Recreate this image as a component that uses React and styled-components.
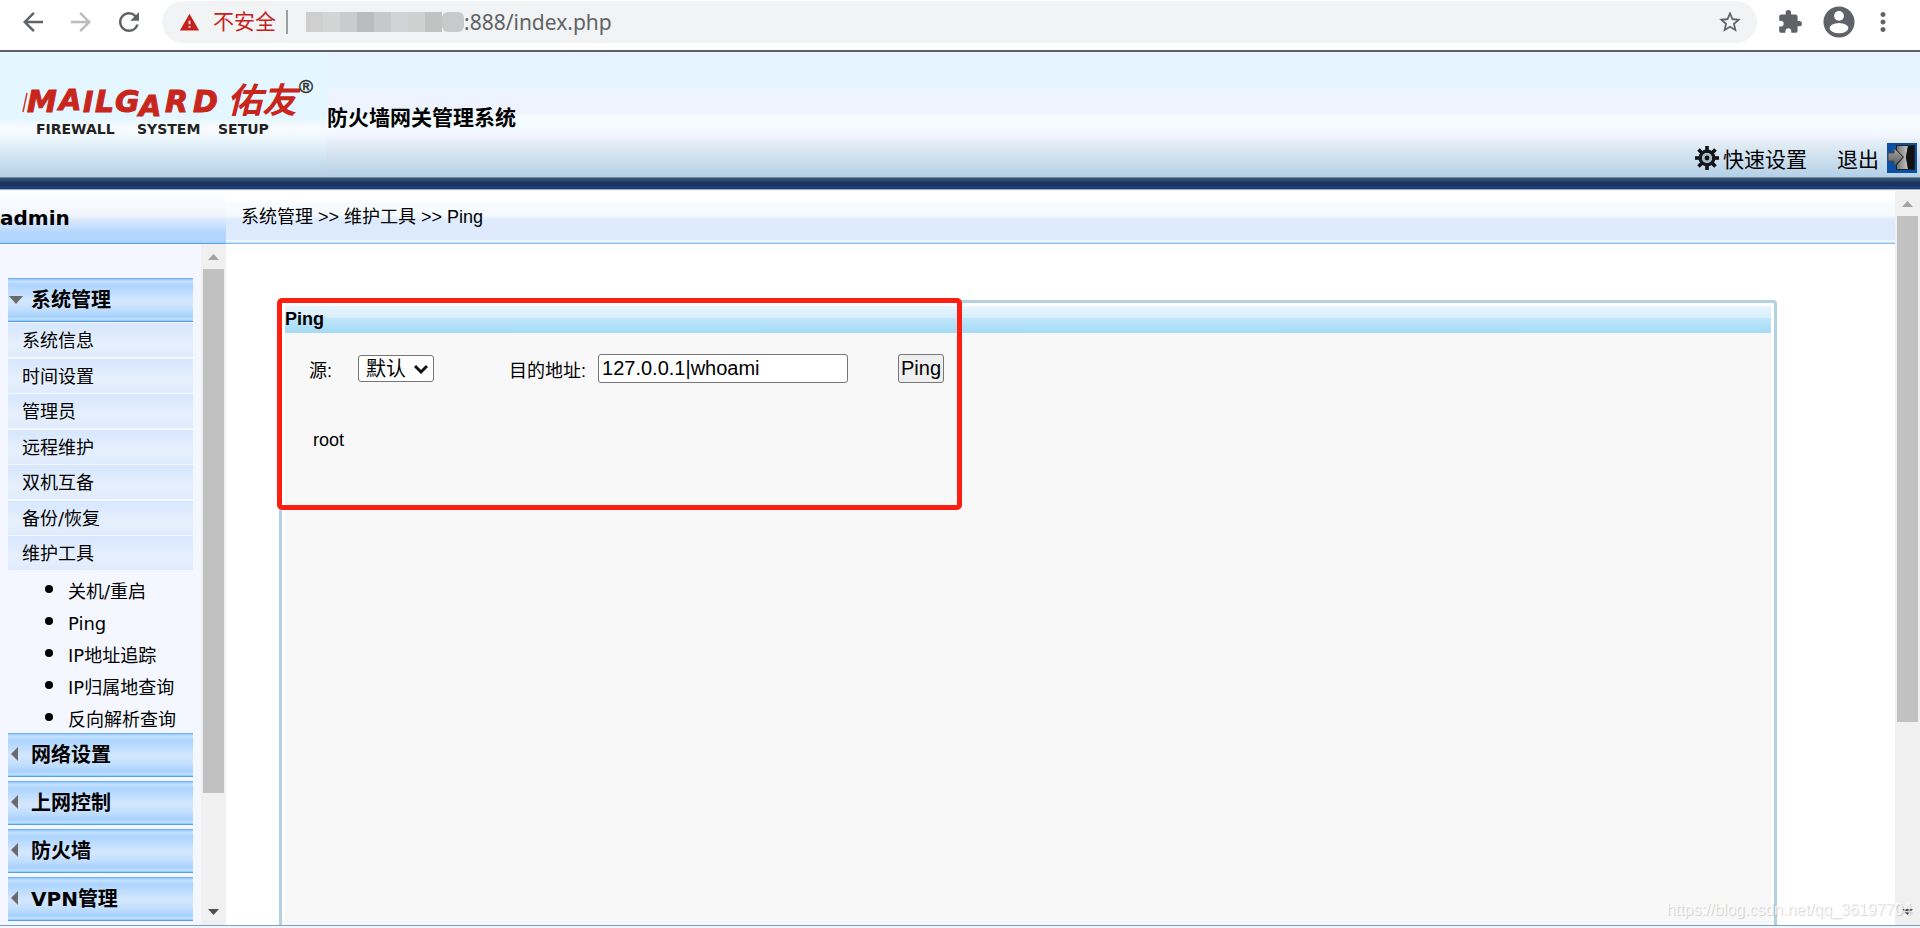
import React, { useState } from 'react';
import styled, { createGlobalStyle } from 'styled-components';
import {
  MdArrowBack,
  MdArrowForward,
  MdRefresh,
  MdWarning,
  MdStarBorder,
  MdExtension,
  MdMoreVert,
} from 'react-icons/md';

const GlobalStyle = createGlobalStyle`
  * {
    box-sizing: border-box;
  }

  body {
    margin: 0;
    font-family: "Liberation Sans", "Noto Sans CJK SC", sans-serif;
    font-size: 18px;
    color: #000;
  }

  button, input, select {
    font-family: inherit;
    color: inherit;
    margin: 0;
  }

  ul {
    list-style: none;
    margin: 0;
    padding: 0;
  }
`;

const Page = styled.div`
  display: flex;
  flex-direction: column;
  height: 100vh;
  overflow: hidden;
  background: #fff;
`;

/* browser bar */

const BrowserBar = styled.div`
  display: flex;
  align-items: center;
  flex: none;
  height: 52px;
  padding: 1px 9px 7px 18px;
  border-bottom: 2px solid #5b6168;
`;

const IconButton = styled.button`
  display: flex;
  align-items: center;
  justify-content: center;
  width: ${(props) => props.$width || 48}px;
  height: 40px;
  padding: 0;
  border: 0;
  background: none;
  color: ${(props) => (props.$muted ? '#babcbe' : '#5f6368')};
`;

const NavButtons = styled.div`
  display: flex;
  margin: 0 9px 0 -9px;
`;

const AddressPill = styled.div`
  display: flex;
  align-items: center;
  flex: 1;
  height: 42px;
  padding: 0 3px 0 17px;
  border-radius: 21px;
  background: #f1f3f4;
`;

const Insecure = styled.span`
  display: flex;
  align-items: center;
  gap: 13px;
  padding-right: 10px;
  border-right: 2px solid #9aa0a6;
  font-size: 21px;
  line-height: 24px;
  color: #c5221f;
`;

const Mosaic = styled.svg`
  flex: none;
  width: 162px;
  height: 30px;
  margin-left: 14px;
`;

const AddressInput = styled.input`
  flex: 1;
  min-width: 0;
  padding: 0;
  border: 0;
  background: none;
  font-family: "Noto Sans", sans-serif;
  font-size: 21px;
  color: #5f6368;
`;

/* application header */

const Header = styled.header`
  display: flex;
  align-items: stretch;
  flex: none;
  height: 125px;
  background: linear-gradient(#e5f4ff 0 36px, #eef4ff 36px 62px, #f5fcff 63px 76px, #f1f5ff 84px, #e1ecf5 92px, #b4d0e6 125px);
`;

const HeaderBand = styled.div`
  flex: none;
  height: 14px;
  background: linear-gradient(#6f8496 0 1px, #33506f 1px 3px, #1c3561 5px, #1a3360 9px, #1f4a86 11px, #0f2d5e 12px, #a9a9c6 12px 13px, #f4f4fa 13px);
`;

const LogoArea = styled.div`
  width: 327px;
  background: linear-gradient(#e4f6ff 0 66px, #f5faff 74px 82px, #e6f3fb 90px, #b4d0e6 125px);
`;

const SystemTitle = styled.h1`
  margin: 0;
  padding-top: 50px;
  font-size: 21px;
  line-height: 32px;
`;

const HeaderActions = styled.nav`
  display: flex;
  align-items: flex-end;
  gap: 30px;
  margin-left: auto;
  padding: 0 3px 4px 0;
`;

const HeaderLink = styled.a`
  display: flex;
  align-items: center;
  gap: ${(props) => props.$gap}px;
  height: 30px;
  font-size: 21px;
  color: #000;
  text-decoration: none;
`;

/* frames */

const Frames = styled.div`
  display: flex;
  flex: 1;
  min-height: 0;
  border-bottom: 1px solid #7c9cd0;
`;

const BottomFrame = styled.div`
  flex: none;
  height: 2px;
  background: #f1f6ff;
`;

const Sidebar = styled.aside`
  display: flex;
  flex-direction: column;
  flex: none;
  width: 226px;
`;

const UserBar = styled.div`
  flex: none;
  height: 53px;
  border-bottom: 1px solid #5a9ff0;
  background: linear-gradient(#fff, #f0f4fc 25px, #dfeafc 28px, #b3d6fe 42px 49px, #a2d2ff 52px);
  font-family: "DejaVu Sans", sans-serif;
  font-size: 20px;
  font-weight: bold;
  line-height: 54px;
`;

const SidebarBody = styled.div`
  display: flex;
  flex: 1;
  min-height: 0;
`;

const Menu = styled.nav`
  flex: 1;
  padding: 34px 8px 0;
  overflow: hidden;
  background: #f4f7ff;
  font-family: "DejaVu Sans", "Noto Sans CJK SC", sans-serif;
`;

const MenuHeading = styled.button`
  display: flex;
  align-items: center;
  width: 100%;
  height: 44px;
  margin-bottom: ${(props) => (props.$open ? 1 : 4)}px;
  padding: 0;
  border: 0;
  border-top: 1px solid #6fb0f8;
  border-bottom: 1px solid #579df2;
  background: linear-gradient(#a0cfff 0 1px, #c8e2ff 2px, #acd4ff 6px, #d5e7fe 22px, #c4dfff 30px, #a5d1ff 38px, #c4e4ff 40px, #8ec6ff 42px);
  font-size: 20px;
  font-weight: bold;
  line-height: 28px;
`;

const MenuArrow = styled.svg`
  width: 16px;
  height: 16px;
  margin-right: 7px;
  fill: #6b6b6b;
`;

const MenuItem = styled.li`
  height: 34px;
  background: linear-gradient(#d6e7ff, #e6effd 60%, #dfecfd);

  &:nth-child(odd) {
    margin-bottom: 2px;
  }

  &:nth-child(even) {
    margin-bottom: 1px;
  }

  &:last-child {
    margin-bottom: 0;
  }
`;

const MenuLink = styled.a`
  display: block;
  padding-left: 14px;
  font-size: 18px;
  line-height: 36px;
  color: #000;
  text-decoration: none;
`;

const SubMenu = styled.ul`
  padding-top: 3px;
`;

const SubItem = styled.li`
  display: flex;
  align-items: center;
  gap: 15px;
  height: 32px;
  padding: 5px 0 0 37px;

  &::before {
    content: '';
    width: 8px;
    height: 8px;
    margin-bottom: 6px;
    border-radius: 50%;
    background: #000;
  }
`;

const SubLink = styled.a`
  font-size: 18px;
  line-height: 28px;
  color: #000;
  text-decoration: none;
  white-space: nowrap;
`;

const Track = styled.div`
  display: flex;
  flex-direction: column;
  align-items: center;
  flex: none;
  width: 25px;
  background: #f0f0f0;
`;

const TrackArrow = styled.svg`
  flex: none;
  width: 25px;
  height: 25px;
  fill: ${(props) => (props.$dim ? '#a3a3a3' : '#505050')};
`;

const Thumb = styled.div`
  flex: 0 0 auto;
  width: 21px;
  height: ${(props) => props.$height};
  background: #c1c1c1;
`;

const ThumbArea = styled.div`
  flex: 1;
  min-height: 0;
`;

const Main = styled.main`
  display: flex;
  flex-direction: column;
  flex: 1;
  min-width: 0;
`;

const Breadcrumb = styled.div`
  flex: none;
  height: 53px;
  padding-left: 15px;
  border-bottom: 1px solid #86bdf6;
  background: linear-gradient(#fff 0 11px, #f5fbff 12px 24px, #deebff 29px 49px, #fff 50px, #b5dcff 52px);
  line-height: 52px;
`;

const Content = styled.div`
  position: relative;
  display: flex;
  flex: 1;
  min-height: 0;
  padding: 56px 118px 0 53px;
`;

const Panel = styled.section`
  flex: 1;
  padding: 3px 3px 0;
  border: 3px solid #adcbe0;
  border-bottom: 0;
  border-color: #b4d0e3;
  border-radius: 4px 4px 0 0;
  background: linear-gradient(#f8f8f8, #f8f8f8) content-box, #fff;
`;

const PanelTitle = styled.h2`
  margin: 0;
  height: 27px;
  background: linear-gradient(#e8f5ff, #d8eefa 12px, #c0e6fd 12px, #a5daf5);
  font-size: 18px;
  line-height: 27px;
`;

const PingForm = styled.form`
  display: flex;
  align-items: center;
  height: 71px;
  padding-left: 24px;
`;

const Field = styled.div`
  display: flex;
  align-items: center;
  gap: ${(props) => props.$gap}px;
  margin-right: ${(props) => props.$after}px;
`;

const SelectBox = styled.div`
  position: relative;
  display: flex;
`;

const Select = styled.select`
  appearance: none;
  width: 76px;
  height: 27px;
  padding: 0 7px;
  border: 1px solid #767676;
  border-radius: 3px;
  background: #fff;
  font-size: 20px;
`;

const Chevron = styled.svg`
  position: absolute;
  top: 8px;
  right: 6px;
  width: 14px;
  height: 12px;
  fill: none;
  stroke: #111;
  stroke-width: 3px;
  pointer-events: none;
`;

const TextInput = styled.input`
  width: 250px;
  height: 29px;
  padding: 0 3px;
  border: 1px solid #767676;
  border-radius: 3px;
  font-size: 20px;
`;

const PingButton = styled.button`
  height: 29px;
  padding: 0 2px;
  border: 1px solid #767676;
  border-radius: 3px;
  background: #efefef;
  font-size: 20px;
`;

const Result = styled.output`
  display: block;
  padding: 25px 0 0 28px;
  line-height: 22px;
`;

/* red frame drawn over the ping form */
const Highlight = styled.div`
  position: absolute;
  top: 54px;
  left: 51px;
  width: 685px;
  height: 212px;
  border: 5px solid #ff1f12;
  border-radius: 5px;
  pointer-events: none;
`;

const Watermark = styled.span`
  position: absolute;
  right: 8px;
  bottom: 7px;
  font-size: 16px;
  line-height: 22px;
  color: rgba(255, 255, 255, 0.8);
  text-shadow: 1px 1px 1px rgba(0, 0, 0, 0.18);
`;

const menuItems = ['系统信息', '时间设置', '管理员', '远程维护', '双机互备', '备份/恢复', '维护工具'];
const toolItems = ['关机/重启', 'Ping', 'IP地址追踪', 'IP归属地查询', '反向解析查询'];
const closedSections = ['网络设置', '上网控制', '防火墙', 'VPN管理'];
const mosaicColors = ['#cfcfcf', '#d3d5d5', '#c9cbcc', '#babcbf', '#c6c8ca', '#d0d2d3', '#cfd1d1', '#c1c2c2', '#c7c9ca'];

const logoLetters = [
  ['M', 27, 60, 30],
  ['A', 59, 58, 29],
  ['I', 83, 60, 28],
  ['L', 95, 60, 30],
  ['G', 115, 60, 30],
  ['A', 139, 64, 29],
  ['R', 165, 60, 30],
  ['D', 193, 60, 30],
];

const Logo = () => (
  <svg width="327" height="125" viewBox="0 0 327 125" role="img" aria-label="MAILGARD">
    <path d="M27 41L23 60" stroke="#cf3a30" strokeWidth="1.5" />
    <g fill="#c8251c" stroke="#c8251c" fontFamily="DejaVu Sans, sans-serif" fontWeight="bold" fontStyle="italic">
      {logoLetters.map(([letter, x, y, size], i) => (
        <text key={i} x={x} y={y} fontSize={size}>{letter}</text>
      ))}
    </g>
    <text x="227" y="61" fill="#c8251c" fontFamily="Noto Sans CJK SC, sans-serif" fontSize="35" fontStyle="italic" fontWeight="bold">
      佑友
    </text>
    <text x="299" y="41" fill="#333" stroke="#333" strokeWidth="0.5" fontFamily="Liberation Sans, sans-serif" fontSize="19">®</text>
    <g fill="#222" fontFamily="DejaVu Sans, sans-serif" fontSize="14" fontWeight="bold">
      <text x="36" y="82">FIREWALL</text>
      <text x="137" y="82">SYSTEM</text>
      <text x="218" y="82">SETUP</text>
    </g>
  </svg>
);

const Avatar = () => (
  <svg width="34" height="34" viewBox="0 0 34 34">
    <circle cx="17" cy="17" r="16.5" fill="#5f6368" />
    <circle cx="17" cy="10.5" r="5.2" fill="#fff" />
    <ellipse cx="17" cy="23.5" rx="10" ry="5.5" fill="#fff" />
  </svg>
);

const GearIcon = () => (
  <svg width="24" height="24" viewBox="-12 -12 24 24">
    {[0, 45, 90, 135, 180, 225, 270, 315].map((angle) => (
      <rect key={angle} x="-1.8" y="-12" width="3.600" height="6" fill="#111" transform={`rotate(${angle})`} />
    ))}
    <circle r="6.8" fill="none" stroke="#15181b" strokeWidth="3.4" />
    <circle r="5" fill="#a9bac6" />
    <circle r="2.4" fill="#111" />
  </svg>
);

const ExitIcon = () => (
  <svg width="30" height="30" viewBox="0 0 30 30">
    <defs>
      <linearGradient id="exitDoor" x1="0" y1="0" x2="1" y2="0">
        <stop offset="0" stopColor="#777" />
        <stop offset="1" stopColor="#c4c4c4" />
      </linearGradient>
      <linearGradient id="exitArrow" x1="0" y1="0" x2="0" y2="1">
        <stop offset="0" stopColor="#a5a5a5" />
        <stop offset="1" stopColor="#5c5c5c" />
      </linearGradient>
    </defs>
    <rect width="30" height="30" fill="#0c50a6" />
    <path d="M9 2h19v25H9v-5l6-7-6-7z" fill="#222" />
    <path d="M10 3h11l-2 11 2 12H10v-4l7-8-7-7z" fill="url(#exitDoor)" />
    <path d="M21 3h6v23h-6l-2-12z" fill="#111" />
    <path d="M1 10h6V5l9 9-9 9v-5H1z" fill="url(#exitArrow)" stroke="#444" strokeWidth="1" />
  </svg>
);

const ScrollTrack = ({ thumb }) => (
  <Track>
    <TrackArrow $dim viewBox="0 0 25 25">
      <path d="M7 16h11l-5.500-6z" />
    </TrackArrow>
    <ThumbArea>
      <Thumb $height={thumb} />
    </ThumbArea>
    <TrackArrow viewBox="0 0 25 25">
      <path d="M7 9h11l-5.500 6z" />
    </TrackArrow>
  </Track>
);

const SectionHeading = ({ label, open, onClick }) => (
  <MenuHeading type="button" $open={open} aria-expanded={open} onClick={onClick}>
    <MenuArrow viewBox="0 0 16 16">
      <path d={open ? 'M1 4h14l-7 8z' : 'M10 0v14L3 7z'} />
    </MenuArrow>
    {label}
  </MenuHeading>
);

const App = () => {
  const [open, setOpen] = useState(true);
  const [target, setTarget] = useState('127.0.0.1|whoami');
  const [result, setResult] = useState('root');

  const handlePing = (e) => {
    e.preventDefault();
    setResult('root');
  };

  return (
    <Page>
      <GlobalStyle />
      <BrowserBar>
        <NavButtons>
          <IconButton type="button" aria-label="Back"><MdArrowBack size={30} /></IconButton>
          <IconButton type="button" aria-label="Forward" $muted><MdArrowForward size={30} /></IconButton>
          <IconButton type="button" aria-label="Reload"><MdRefresh size={30} /></IconButton>
        </NavButtons>
        <AddressPill>
          <Insecure>
            <MdWarning size={21} />
            不安全
          </Insecure>
          <Mosaic viewBox="0 0 162 30">
            {mosaicColors.map((color, i) => (
              <rect key={i} x={4 + i * 17} y="5" width={i === 8 ? 22 : 17} height="20" rx={i === 8 ? 6 : 0} fill={color} />
            ))}
          </Mosaic>
          <AddressInput aria-label="Address" defaultValue=":888/index.php" />
          <IconButton type="button" aria-label="Bookmark"><MdStarBorder size={26} /></IconButton>
        </AddressPill>
        <IconButton type="button" aria-label="Extensions" $width={66}><MdExtension size={26} /></IconButton>
        <IconButton type="button" aria-label="Profile" $width={32}><Avatar /></IconButton>
        <IconButton type="button" aria-label="More" $width={56}><MdMoreVert size={30} /></IconButton>
      </BrowserBar>

      <Header>
        <LogoArea>
          <Logo />
        </LogoArea>
        <SystemTitle>防火墙网关管理系统</SystemTitle>
        <HeaderActions>
          <HeaderLink href="#setup" $gap={4}>
            <GearIcon />
            快速设置
          </HeaderLink>
          <HeaderLink href="#logout" $gap={8}>
            退出
            <ExitIcon />
          </HeaderLink>
        </HeaderActions>
      </Header>
      <HeaderBand />

      <Frames>
        <Sidebar>
          <UserBar>admin</UserBar>
          <SidebarBody>
            <Menu>
              <SectionHeading label="系统管理" open={open} onClick={() => setOpen(!open)} />
              {open && (
                <>
                  <ul>
                    {menuItems.map((item) => (
                      <MenuItem key={item}>
                        <MenuLink href="#menu">{item}</MenuLink>
                      </MenuItem>
                    ))}
                  </ul>
                  <SubMenu>
                    {toolItems.map((item) => (
                      <SubItem key={item}>
                        <SubLink href="#tool">{item}</SubLink>
                      </SubItem>
                    ))}
                  </SubMenu>
                </>
              )}
              {closedSections.map((section) => (
                <SectionHeading key={section} label={section} open={false} />
              ))}
            </Menu>
            <ScrollTrack thumb="83%" />
          </SidebarBody>
        </Sidebar>

        <Main>
          <Breadcrumb>系统管理 &gt;&gt; 维护工具 &gt;&gt; Ping</Breadcrumb>
          <Content>
            <Panel>
              <PanelTitle>Ping</PanelTitle>
              <PingForm onSubmit={handlePing}>
                <Field $gap={26} $after={75}>
                  <label htmlFor="source">源:</label>
                  <SelectBox>
                    <Select id="source">
                      <option>默认</option>
                    </Select>
                    <Chevron viewBox="0 0 14 12">
                      <path d="M1 3l6 6 6-6" />
                    </Chevron>
                  </SelectBox>
                </Field>
                <Field $gap={12} $after={50}>
                  <label htmlFor="target">目的地址:</label>
                  <TextInput id="target" type="text" value={target} onChange={(e) => setTarget(e.target.value)} />
                </Field>
                <PingButton type="submit">Ping</PingButton>
              </PingForm>
              <Result>{result}</Result>
            </Panel>
            <Highlight />
          </Content>
        </Main>
        <ScrollTrack thumb="74%" />
      </Frames>
      <BottomFrame />
      <Watermark>https://blog.csdn.net/qq_36197704</Watermark>
    </Page>
  );
};

export default App;
